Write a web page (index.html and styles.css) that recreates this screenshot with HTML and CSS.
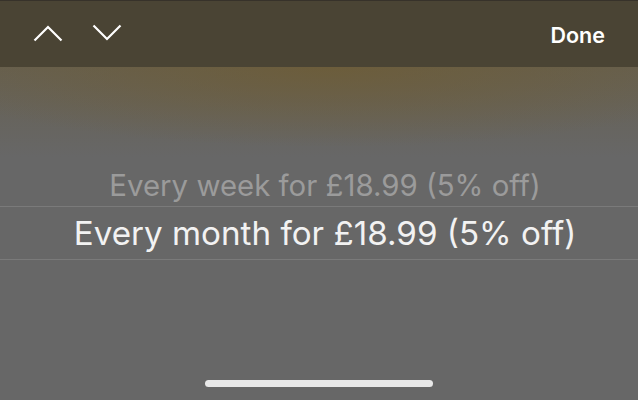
FILE: index.html
```html
<!DOCTYPE html>
<html lang="en">
<head>
<meta charset="utf-8">
<title>Picker</title>
<link rel="stylesheet" href="styles.css">
</head>
<body>
<div class="screen">
  <div class="toolbar">
    <div class="nav">
      <svg class="chev" width="30" height="18" viewBox="0 0 30 18" aria-hidden="true"><polyline points="1.5,16.5 15,3 28.5,16.5" fill="none" stroke="#fff" stroke-width="2.2"/></svg>
      <svg class="chev" width="30" height="18" viewBox="0 0 30 18" aria-hidden="true"><polyline points="1.5,1.5 15,15 28.5,1.5" fill="none" stroke="#fff" stroke-width="2.2"/></svg>
    </div>
    <div class="done">Done</div>
  </div>
  <div class="picker">
    <div class="row row-faded">Every week for £18.99 (5% off)</div>
    <div class="row row-selected">Every month for £18.99 (5% off)</div>
  </div>
  <div class="home-bar"></div>
</div>
</body>
</html>
```
FILE: styles.css
```css
html, body {
  margin: 0;
  padding: 0;
}
body {
  width: 638px;
  height: 400px;
  overflow: hidden;
  background: #676767;
  font-family: Inter, "Liberation Sans", sans-serif;
}
.screen {
  width: 638px;
  height: 400px;
  display: flex;
  flex-direction: column;
  background:
    radial-gradient(ellipse 420px 80px at 330px 0px, rgba(110, 92, 52, 0.75), rgba(110, 92, 52, 0) 100%),
    linear-gradient(#666051 0px, #676767 90px, #676767 100%);
  background-position: 0 67px, 0 67px;
  background-repeat: no-repeat;
  background-color: #676767;
}
.toolbar {
  height: 66px;
  border-top: 1px solid #37322a;
  background: #4a4434;
  display: flex;
  align-items: center;
  justify-content: space-between;
  padding: 0 33px 0 33px;
  flex: none;
}
.nav {
  display: flex;
  gap: 29px;
  margin-top: -2px;
}
.chev {
  display: block;
}
.done {
  color: #ffffff;
  font-size: 21.5px;
  font-weight: 600;
  margin-top: 1px;
}
.picker {
  padding-top: 87px;
  display: flex;
  flex-direction: column;
}
.row {
  height: 52px;
  display: flex;
  align-items: center;
  justify-content: center;
  white-space: nowrap;
  padding-left: 12px;
}
.row-faded {
  color: #9b9b9b;
  font-size: 29.4px;
  border-bottom: 1px solid #7a7a7a;
  padding-top: 10px;
  box-sizing: border-box;
  height: 53px;
}
.row-selected {
  color: #f2f2f2;
  font-size: 33.2px;
  border-bottom: 1px solid #7a7a7a;
}
.home-bar {
  width: 228px;
  height: 7px;
  border-radius: 4px;
  background: #e8e8e8;
  margin: auto auto 13px auto;
}
```
